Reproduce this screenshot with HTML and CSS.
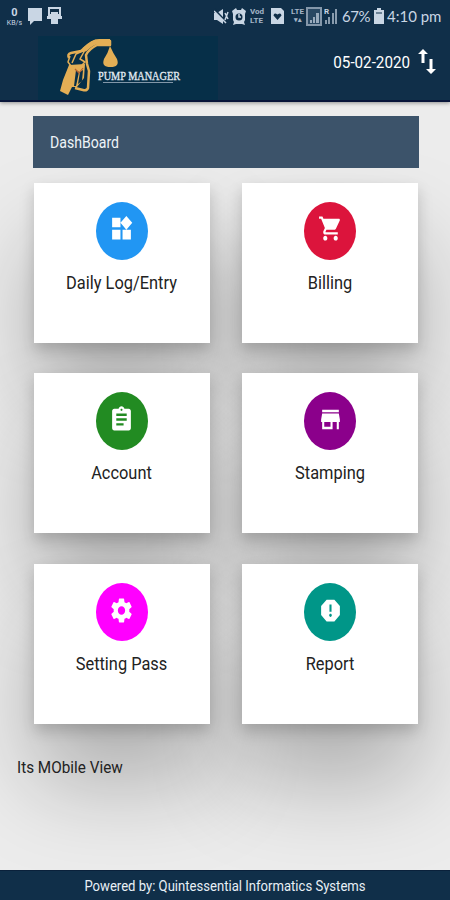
FILE: index.html
```html
<!DOCTYPE html>
<html lang="en">
  <head>
    <meta charset="UTF-8" />
    <meta name="viewport" content="width=device-width, initial-scale=1.0" />
    <title>Pump Manager</title>
    <link rel="stylesheet" href="styles.css">
  </head>
  <body>
    <header class="header">
      <div class="status-bar">
        <div class="status-left">
          <span class="net-speed"><b>0</b><small>KB/s</small></span>
          <svg width="14" height="17" viewBox="0 0 14 17"><path d="M0 0h14v13H6l-4 4v-4H0z" /></svg>
          <svg width="15" height="18" viewBox="0 0 15 18"><path fill-rule="evenodd" d="M1 0h13v9h1v3h-4v5H4v-5H0V9h1zM3 2v5h1V5h7v2h1V2z" /></svg>
        </div>
        <div class="status-right">
          <svg class="mute" width="15" height="17" viewBox="0 0 15 17"><path d="M0 5h3l6-4v15l-6-4H0z" /><path class="line-dark" d="M0 1l13 14" /><path class="line" d="M0 3l12 12M11 5l3 6M14 4l-3 8" /></svg>
          <svg class="alarm" width="14" height="17" viewBox="0 0 14 17"><path d="M0 3l4-3 1 2h4l1-2 4 3-1 3v6l-1 2 1 3-3-1H4l-3 1 1-3-1-2V6z" /><circle class="face" cx="7" cy="9" r="3.500" /><path class="line" d="M7 6v3h2" /></svg>
          <span class="volte"><i>Vod</i><i>LTE</i></span>
          <svg class="sim" width="13" height="16" viewBox="0 0 13 16"><path d="M0 0h10l3 3v13H0z" /><path class="dark" d="M6.500 12L2.500 7.500Q3 4 6.500 6.500Q10 4 10.500 7.500z" /></svg>
          <span class="lte"><i>LTE</i><i class="arrows">▾▴</i></span>
          <svg class="signal" width="16" height="19" viewBox="0 0 16 19"><path class="box" d="M1 1h14v17H1z" /><path d="M4 16v-3h2v3zM7 16v-6h2v6zM10 16V6h3v10z" opacity=".7" /></svg>
          <svg class="signal2" width="14" height="17" viewBox="0 0 14 17"><text class="roam" x="0" y="6">R</text><path d="M1 16v-4h2v4zM4 16V9h2v7zM8 16V5h2v11zM11 16V1h2v15z" opacity=".65" /></svg>
          <span class="battery-text">67%</span>
          <svg class="battery" width="10" height="16" viewBox="0 0 10 16"><path d="M3 0h4v2h3v14H0V2h3z" /><path class="dark" d="M2 4h6v2H2z" opacity=".5" /></svg>
          <span class="clock">4:10 pm</span>
        </div>
      </div>
      <div class="app-bar">
        <svg class="logo" width="180" height="64" viewBox="0 0 180 64">
          <rect class="logo-bg" width="180" height="64" />
          <path class="gold-line" d="M31 22Q29 18 33 17L43 15Q51 8 57 5L72 5V9H59Q51 13 48 19L49 28 51 35 50 52Q49 55 45 54L37 52" />
          <path class="gold-line thick" d="M46 14Q55 5 62 5.500H72" />
          <path class="gold-line thin" d="M32 20L30 26 33 30M34 27L38 18 47 14 42 23 47 26 44 29" />
          <path class="gold" fill-rule="evenodd" d="M31 29L47 28 46 42 39 51H34L30 59 22 55 25 44zM38 34L36 50H38L41 36zM42 36L40 48 44 45 45 34z" />
          <path class="red-line" d="M37 33l4 4 4-5" />
          <path class="gold" d="M72 10Q70 17 66 23Q63 31 72.500 31Q82 31 79 23Q75 17 72 10z" />
          <text class="logo-text" x="60" y="44" textLength="82" lengthAdjust="spacingAndGlyphs">PUMP MANAGER</text>
          <path class="logo-rule" d="M65 46.500H135" />
        </svg>
        <div class="date">
          <span class="date-text">05-02-2020</span>
          <svg width="18" height="25" viewBox="0 0 18 25"><path d="M3.500 14V5H0L5 0l5 5H6.500v9zM11.500 10h3v10H18l-5 5-5-5h3.500z" /></svg>
        </div>
      </div>
    </header>

    <main class="content">
      <h1 class="title"><span>DashBoard</span></h1>

      <div class="cards">
        <a class="card">
          <span class="circle blue"><svg viewBox="0 0 24 24" preserveAspectRatio="none"><path d="M13 13v8h8v-8h-8zM3 21h8v-8H3v8zM3 3v8h8V3H3zm13.660-1.310L11 7.340 16.660 13l5.660-5.660-5.660-5.650z" /></svg></span>
          <span class="label">Daily Log/Entry</span>
        </a>
        <a class="card">
          <span class="circle red"><svg viewBox="0 0 24 24" preserveAspectRatio="none"><path d="M7 18c-1.100 0-1.990.9-1.990 2S5.900 22 7 22s2-.9 2-2-.9-2-2-2zM1 2v2h2l3.600 7.590-1.350 2.450c-.16.280-.25.610-.25.960 0 1.100.9 2 2 2h12v-2H7.420c-.14 0-.25-.11-.25-.25l.03-.12.9-1.630h7.450c.75 0 1.410-.41 1.750-1.030l3.580-6.490c.08-.14.120-.31.120-.48 0-.55-.45-1-1-1H5.210l-.94-2H1zm16 16c-1.100 0-1.990.9-1.990 2s.89 2 1.990 2 2-.9 2-2-.9-2-2-2z" /></svg></span>
          <span class="label">Billing</span>
        </a>
        <a class="card">
          <span class="circle green"><svg viewBox="0 0 24 24" preserveAspectRatio="none"><path d="M19 3h-4.180C14.400 1.840 13.300 1 12 1c-1.300 0-2.400.84-2.820 2H5c-1.100 0-2 .9-2 2v14c0 1.100.9 2 2 2h14c1.100 0 2-.9 2-2V5c0-1.100-.9-2-2-2zm-7 0c.55 0 1 .45 1 1s-.45 1-1 1-1-.45-1-1 .45-1 1-1zm2 14H7v-2h7v2zm3-4H7v-2h10v2zm0-4H7V7h10v2z" /></svg></span>
          <span class="label">Account</span>
        </a>
        <a class="card">
          <span class="circle purple"><svg viewBox="0 0 24 24" preserveAspectRatio="none"><path d="M20 4H4v2h16V4zm1 10v-2l-1-5H4l-1 5v2h1v6h10v-6h4v6h2v-6h1zm-9 4H6v-4h6v4z" /></svg></span>
          <span class="label">Stamping</span>
        </a>
        <a class="card">
          <span class="circle pink"><svg viewBox="0 0 24 24" preserveAspectRatio="none"><path d="M19.430 12.980c.04-.32.070-.64.070-.98s-.03-.66-.07-.98l2.110-1.650c.19-.15.240-.42.120-.64l-2-3.460c-.12-.22-.39-.3-.61-.22l-2.490 1c-.52-.4-1.080-.73-1.690-.98l-.38-2.650C14.460 2.180 14.250 2 14 2h-4c-.25 0-.46.180-.49.420l-.38 2.650c-.61.250-1.170.590-1.690.980l-2.490-1c-.23-.09-.49 0-.61.220l-2 3.460c-.13.220-.07.490.12.640l2.110 1.650c-.04.320-.07.650-.07.980s.03.660.07.980l-2.110 1.650c-.19.150-.24.420-.12.640l2 3.460c.12.220.39.300.61.220l2.490-1c.52.400 1.080.730 1.690.980l.38 2.650c.03.240.24.420.49.420h4c.25 0 .46-.18.490-.42l.38-2.650c.61-.25 1.170-.59 1.690-.98l2.490 1c.23.090.49 0 .61-.22l2-3.460c.12-.22.070-.49-.12-.64l-2.110-1.650zM12 15.500c-1.930 0-3.500-1.570-3.500-3.500s1.570-3.500 3.500-3.500 3.500 1.570 3.500 3.500-1.570 3.500-3.500 3.500z" /></svg></span>
          <span class="label">Setting Pass</span>
        </a>
        <a class="card">
          <span class="circle teal"><svg viewBox="0 0 24 24" preserveAspectRatio="none"><path d="M15.730 3H8.270L3 8.270v7.460L8.270 21h7.460L21 15.730V8.270L15.730 3zM12 17.300c-.72 0-1.300-.58-1.300-1.300 0-.72.580-1.300 1.300-1.300.72 0 1.300.580 1.300 1.300 0 .72-.58 1.300-1.300 1.300zm1-4.300h-2V7h2v6z" /></svg></span>
          <span class="label">Report</span>
        </a>
      </div>

      <p class="note"><span>Its MObile View</span></p>
    </main>

    <footer class="footer"><span>Powered by: Quintessential Informatics Systems</span></footer>
  </body>
</html>
```

FILE: styles.css
```css
* {
  box-sizing: border-box;
}
body {
  margin: 0;
  height: 900px;
  overflow: hidden;
  display: flex;
  flex-direction: column;
  font-family: Roboto, sans-serif;
  background-color: #ececec;
  color: #222;
}
i {
  font-style: normal;
}
.header {
  height: 102px;
  flex: none;
  background-color: #102f49;
  border-bottom: 2px solid #08153a;
  box-shadow: 0 1px 4px rgba(0, 0, 0, 0.4);
}
.status-bar {
  height: 32px;
  padding: 0 8px 0 6px;
  display: flex;
  align-items: center;
  justify-content: space-between;
  color: #c9d6e4;
  fill: #c9d6e4;
}
.status-left,
.status-right {
  display: flex;
  align-items: center;
}
.status-left {
  gap: 5px;
}
.net-speed {
  width: 17px;
  display: flex;
  flex-direction: column;
  align-items: center;
  font-size: 11px;
  line-height: 13px;
}
.net-speed small {
  font-size: 7px;
  line-height: 8px;
}
.line {
  fill: none;
  stroke: #c9d6e4;
  stroke-width: 1.5;
}
.line-dark {
  stroke: #102f49;
  stroke-width: 2;
}
.alarm {
  margin-left: 3px;
}
.face,
.dark {
  fill: #102f49;
}
.volte,
.lte {
  display: flex;
  flex-direction: column;
  font-size: 8px;
  font-weight: bold;
  line-height: 9px;
  opacity: 0.8;
}
.volte {
  width: 14px;
  margin-left: 4px;
}
.sim {
  margin-left: 7px;
}
.lte {
  width: 15px;
  margin-left: 6px;
  text-align: center;
}
.arrows {
  font-size: 7px;
}
.signal {
  margin-left: 1px;
}
.box {
  fill: #294863;
  stroke: #8497aa;
  stroke-width: 2;
}
.signal2 {
  margin-left: 2px;
}
.roam {
  font-size: 8px;
  font-weight: bold;
}
.battery-text,
.clock {
  font-family: Lato, sans-serif;
  font-size: 15px;
  white-space: nowrap;
}
.battery-text {
  width: 28px;
  margin-left: 4px;
  letter-spacing: -0.4px;
}
.battery {
  margin-left: 4px;
}
.clock {
  width: 55px;
  margin-left: 3px;
}
.app-bar {
  height: 68px;
  padding: 4px 14px 0 38px;
  display: flex;
  justify-content: space-between;
}
.logo-bg {
  fill: #062f48;
}
.gold {
  fill: #e3ae55;
}
.gold-line {
  fill: none;
  stroke: #e3ae55;
  stroke-width: 2.5;
  stroke-linejoin: round;
}
.thick {
  stroke-width: 5;
}
.thin {
  stroke-width: 1.5;
}
.red-line {
  fill: none;
  stroke: #b5602f;
  stroke-width: 1.2;
}
.logo-text {
  font-family: "Liberation Serif", serif;
  font-size: 12px;
  fill: #e4edf5;
  stroke: #e4edf5;
  stroke-width: 0.3;
}
.logo-rule {
  stroke: #8297a9;
  stroke-width: 1;
}
.date {
  height: 50px;
  display: flex;
  align-items: center;
  gap: 8px;
  color: #fff;
  fill: #fff;
}
.date-text {
  font-size: 15.2px;
  transform: translateY(1px) scaleY(1.13);
}
.content {
  flex: 1;
  padding: 14px 32px 0 33px;
}
.title {
  height: 52px;
  margin: 0 -1px 14.600px 0;
  padding-left: 17px;
  display: flex;
  align-items: center;
  background-color: #3c536a;
  color: #eef4f8;
  font-size: 14.100px;
  font-weight: 400;
}
.title span {
  transform: scaleY(1.14);
}
.cards {
  display: grid;
  grid-template-columns: 176px 176px;
  grid-auto-rows: 160px;
  gap: 30.900px 32.500px;
  padding-left: 0.500px;
}
.card {
  position: relative;
  padding-top: 19px;
  display: flex;
  flex-direction: column;
  align-items: center;
  background-color: #fff;
}
/* shadows sit behind every card so they never darken a neighbour */
.card::before {
  content: "";
  position: absolute;
  inset: 0;
  z-index: -1;
  box-shadow:
    0 7px 14px rgba(0, 0, 0, 0.18),
    0 58px 92px rgba(0, 0, 0, 0.26);
}
.circle {
  width: 52px;
  height: 58px;
  padding-bottom: 4px;
  border-radius: 50%;
  display: flex;
  align-items: center;
  justify-content: center;
}
.circle svg {
  width: 25px;
  height: 29px;
  fill: #fff;
}
.blue {
  background-color: #2196f3;
}
.red {
  background-color: #dc143c;
}
.green {
  background-color: #228b22;
}
.purple {
  background-color: #8b008b;
}
.pink {
  background-color: #ff00ff;
}
.teal {
  background-color: #009688;
}
.label {
  margin-top: 13px;
  font-size: 16.400px;
  line-height: 20px;
  transform: scaleY(1.13);
}
.note {
  margin: 32.600px 0 0 -16px;
  font-size: 15.300px;
  line-height: 20px;
}
.note span {
  display: inline-block;
  transform: scaleY(1.12);
}
.footer {
  height: 30px;
  flex: none;
  display: flex;
  align-items: center;
  justify-content: center;
  background-color: #102f49;
  color: #e8f0f6;
  font-size: 13.100px;
  padding-top: 1px;
  border-top: 1px solid #0a213b;
}
.footer span {
  transform: scaleY(1.1);
}
```
